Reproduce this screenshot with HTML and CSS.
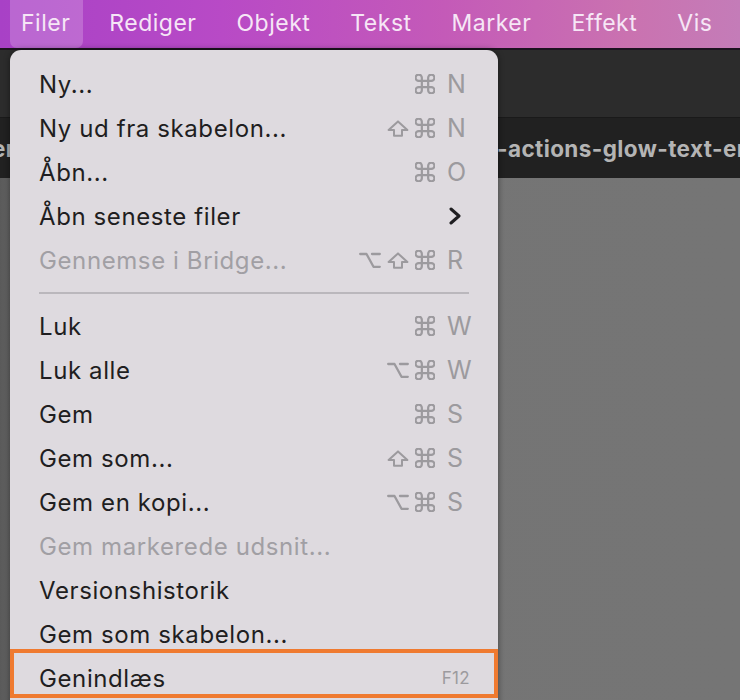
FILE: index.html
```html
<!DOCTYPE html>
<html lang="da">
<head>
<meta charset="utf-8">
<title>Filer-menu</title>
<link rel="stylesheet" href="styles.css">
</head>
<body>
<div class="screen">
  <header class="menubar">
    <span class="mb-item active">Filer</span>
    <span class="mb-item">Rediger</span>
    <span class="mb-item">Objekt</span>
    <span class="mb-item">Tekst</span>
    <span class="mb-item">Marker</span>
    <span class="mb-item">Effekt</span>
    <span class="mb-item">Vis</span>
  </header>
  <div class="toolbar"></div>
  <div class="tabbar">
    <span class="tab-left">er</span>
    <span class="tab-right">-actions-glow-text-en</span>
  </div>
  <div class="canvas"></div>

  <nav class="menu">
    <div class="row"><span class="label">Ny...</span><span class="mods"><svg class="ic cmd" viewBox="2.5 2.5 19 19"><path d="M15 6v12a3 3 0 1 0 3-3H6a3 3 0 1 0 3 3V6a3 3 0 1 0-3 3h12a3 3 0 1 0-3-3"/></svg></span><span class="key">N</span></div>
    <div class="row"><span class="label">Ny ud fra skabelon...</span><span class="mods"><svg class="ic shift" viewBox="0 0 22 17"><path d="M7 15.8V10H1.6L11 1.4l9.4 8.6H15v5.8z"/></svg><svg class="ic cmd" viewBox="2.5 2.5 19 19"><path d="M15 6v12a3 3 0 1 0 3-3H6a3 3 0 1 0 3 3V6a3 3 0 1 0-3 3h12a3 3 0 1 0-3-3"/></svg></span><span class="key">N</span></div>
    <div class="row"><span class="label">Åbn...</span><span class="mods"><svg class="ic cmd" viewBox="2.5 2.5 19 19"><path d="M15 6v12a3 3 0 1 0 3-3H6a3 3 0 1 0 3 3V6a3 3 0 1 0-3 3h12a3 3 0 1 0-3-3"/></svg></span><span class="key">O</span></div>
    <div class="row"><span class="label">Åbn seneste filer</span><span class="arrow"><svg width="12" height="18" viewBox="0 0 12 18"><path d="M2 2 L10 9 L2 16" fill="none" stroke="#1f1e21" stroke-width="3" stroke-linecap="round" stroke-linejoin="round"/></svg></span></div>
    <div class="row disabled"><span class="label">Gennemse i Bridge...</span><span class="mods"><svg class="ic opt" viewBox="0 0 22 16"><path d="M1.2 2H7.5L14.5 14.8H20.8M13 2H20.8"/></svg><svg class="ic shift" viewBox="0 0 22 17"><path d="M7 15.8V10H1.6L11 1.4l9.4 8.6H15v5.8z"/></svg><svg class="ic cmd" viewBox="2.5 2.5 19 19"><path d="M15 6v12a3 3 0 1 0 3-3H6a3 3 0 1 0 3 3V6a3 3 0 1 0-3 3h12a3 3 0 1 0-3-3"/></svg></span><span class="key">R</span></div>
    <div class="sep"></div>
    <div class="row"><span class="label">Luk</span><span class="mods"><svg class="ic cmd" viewBox="2.5 2.5 19 19"><path d="M15 6v12a3 3 0 1 0 3-3H6a3 3 0 1 0 3 3V6a3 3 0 1 0-3 3h12a3 3 0 1 0-3-3"/></svg></span><span class="key">W</span></div>
    <div class="row"><span class="label">Luk alle</span><span class="mods"><svg class="ic opt" viewBox="0 0 22 16"><path d="M1.2 2H7.5L14.5 14.8H20.8M13 2H20.8"/></svg><svg class="ic cmd" viewBox="2.5 2.5 19 19"><path d="M15 6v12a3 3 0 1 0 3-3H6a3 3 0 1 0 3 3V6a3 3 0 1 0-3 3h12a3 3 0 1 0-3-3"/></svg></span><span class="key">W</span></div>
    <div class="row"><span class="label">Gem</span><span class="mods"><svg class="ic cmd" viewBox="2.5 2.5 19 19"><path d="M15 6v12a3 3 0 1 0 3-3H6a3 3 0 1 0 3 3V6a3 3 0 1 0-3 3h12a3 3 0 1 0-3-3"/></svg></span><span class="key">S</span></div>
    <div class="row"><span class="label">Gem som...</span><span class="mods"><svg class="ic shift" viewBox="0 0 22 17"><path d="M7 15.8V10H1.6L11 1.4l9.4 8.6H15v5.8z"/></svg><svg class="ic cmd" viewBox="2.5 2.5 19 19"><path d="M15 6v12a3 3 0 1 0 3-3H6a3 3 0 1 0 3 3V6a3 3 0 1 0-3 3h12a3 3 0 1 0-3-3"/></svg></span><span class="key">S</span></div>
    <div class="row"><span class="label">Gem en kopi...</span><span class="mods"><svg class="ic opt" viewBox="0 0 22 16"><path d="M1.2 2H7.5L14.5 14.8H20.8M13 2H20.8"/></svg><svg class="ic cmd" viewBox="2.5 2.5 19 19"><path d="M15 6v12a3 3 0 1 0 3-3H6a3 3 0 1 0 3 3V6a3 3 0 1 0-3 3h12a3 3 0 1 0-3-3"/></svg></span><span class="key">S</span></div>
    <div class="row disabled"><span class="label">Gem markerede udsnit...</span></div>
    <div class="row"><span class="label">Versionshistorik</span></div>
    <div class="row"><span class="label">Gem som skabelon...</span></div>
    <div class="row"><span class="label">Genindlæs</span><span class="fkey">F12</span></div>
    <div class="highlight"></div>
  </nav>
</div>
</body>
</html>
```

FILE: styles.css
```css
html, body {
  margin: 0;
  padding: 0;
}
body {
  width: 740px;
  height: 700px;
  overflow: hidden;
  font-family: Inter, "Liberation Sans", sans-serif;
}
.screen {
  position: relative;
  width: 740px;
  height: 700px;
  display: flex;
  flex-direction: column;
  background: #747474;
}
.menubar {
  height: 48px;
  flex: none;
  display: flex;
  align-items: stretch;
  padding-left: 10px;
  background: linear-gradient(90deg, #a841c6 0%, #b84ac6 30%, #c45ab8 60%, #ca72b0 85%, #c47cb8 100%);
  border-bottom: 2px solid #1d1320;
  box-sizing: content-box;
  white-space: nowrap;
}
.mb-item {
  display: flex;
  align-items: center;
  padding: 0 12px 2px 12px;
  margin-right: 16px;
  color: #f6e6f6;
  font-size: 23px;
  letter-spacing: 0.5px;
}
.mb-item.active {
  background: rgba(255, 255, 255, 0.2);
  border-radius: 0 0 7px 7px;
  padding: 0 13px 2px 11px;
  margin-right: 14px;
}
.toolbar {
  height: 67px;
  flex: none;
  background: #2c2c2c;
}
.tabbar {
  height: 61px;
  flex: none;
  background: #212121;
  border-top: 1px solid #1a1a1a;
  box-sizing: border-box;
  display: flex;
  align-items: center;
  color: #b4b4b4;
  font-weight: 700;
  font-size: 22.5px;
  letter-spacing: 0.4px;
  overflow: hidden;
  white-space: nowrap;
}
.tab-left {
  margin-left: -8px;
  width: 505px;
  flex: none;
}
.tab-right {
  flex: none;
}
.canvas {
  flex: 1;
  background: linear-gradient(90deg, #5a5a5a 0px, #747474 30px, #757575 100%);
}
.menu {
  position: absolute;
  left: 10px;
  top: 50px;
  width: 488px;
  height: 670px;
  box-sizing: border-box;
  padding: 12px 31px 0 29px;
  background: #dedadf;
  border-radius: 11px 11px 0 0;
  box-shadow: 0 0 6px rgba(0, 0, 0, 0.45);
  color: #1f1e21;
}
.row {
  height: 44px;
  display: flex;
  align-items: center;
  font-size: 24px;
  letter-spacing: 0.6px;
}
.row.disabled .label {
  color: #a19fa4;
}
.label {
  flex: 1;
  white-space: nowrap;
}
.mods {
  display: flex;
  align-items: center;
  gap: 6px;
}
.ic {
  fill: none;
  stroke: #9c9a9e;
  stroke-width: 2.2;
  stroke-linecap: round;
  stroke-linejoin: round;
}
.ic.cmd {
  width: 20px;
  height: 20px;
  stroke-width: 2.1;
}
.ic.shift {
  width: 22px;
  height: 17px;
  stroke-width: 2;
}
.ic.opt {
  width: 22px;
  height: 16px;
  stroke-width: 2.3;
}
.key {
  width: 20px;
  margin-left: 12px;
  color: #9c9a9e;
  font-size: 25px;
  letter-spacing: 0;
}
.arrow {
  display: flex;
  margin-right: 6px;
}
.fkey {
  color: #9c9a9e;
  font-size: 17px;
  letter-spacing: 0.3px;
  margin-right: -3px;
}
.sep {
  height: 22px;
  display: flex;
  align-items: center;
}
.sep::before {
  content: "";
  flex: 1;
  height: 2px;
  margin-right: -2px;
  background: #bab7bc;
}
.highlight {
  position: absolute;
  left: 0;
  top: 599px;
  width: 488px;
  height: 49px;
  box-sizing: border-box;
  border: 4px solid #ef7a30;
}
```
